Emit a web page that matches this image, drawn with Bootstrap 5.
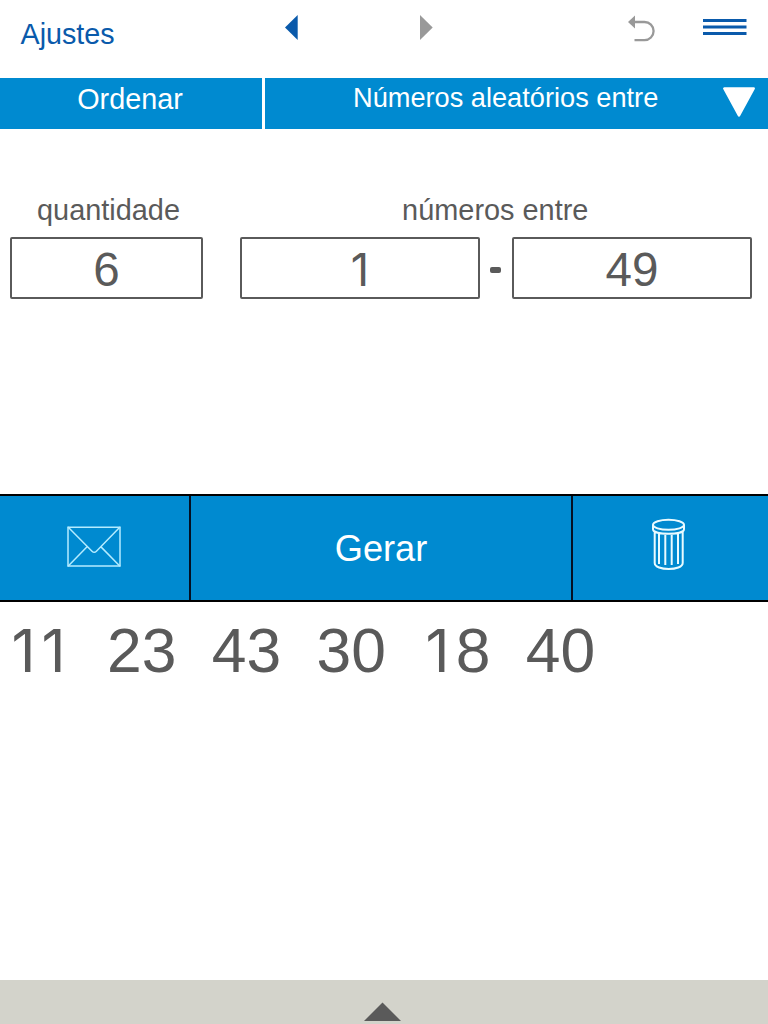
<!DOCTYPE html>
<html lang="pt">
<head>
<meta charset="utf-8">
<meta name="viewport" content="width=device-width, initial-scale=1">
<title>Números aleatórios</title>
<link href="https://cdn.jsdelivr.net/npm/bootstrap@5.3.0/dist/css/bootstrap.min.css" rel="stylesheet">
<style>
  body { font-family: "Liberation Sans", Arial, sans-serif; color: #5a5a5a; background: #fff; }
  svg { display: block; flex: none; }
  .app { height: 1024px; overflow: hidden; }
  .topbar { height: 78px; padding: 14px 21px 0 20.5px; }
  .topbar a { color: #0a5aab; font-size: 28.7px; line-height: 40px; width: 264.5px; }
  .step-next { margin-left: 122px; }
  .undo { margin-left: 195px; }
  .modes { height: 51px; color: #fff; }
  .modes > div { background: #008ad0; }
  .mode-sort { width: 262px; margin-right: 3px; font-size: 28.8px; line-height: 42px; text-indent: -2px; }
  .mode-kind { font-size: 27.2px; line-height: 40px; padding-left: 88px; padding-right: 12px; }
  .inputs { height: 365px; padding: 60px 16px 0 10px; }
  .caption { font-size: 28.9px; line-height: 42px; margin-bottom: 6px; text-align: center; }
  .caption-range { padding-right: 1.5px; }
  .qty { width: 193px; margin-right: 37px; }
  .caption-qty { padding-left: 4px; }
  .field { height: 62px; border: 2px solid #5a5a5a; border-radius: 2px; font-size: 47.6px; line-height: 62px; text-align: center; background: #fff; }
  .field-range { width: 240px; }
  .dash { width: 11px; height: 6px; border-radius: 2px; background: #5a5a5a; margin: 4px 1px 0 0; }
  .actions { height: 108px; border-top: 2px solid #000; border-bottom: 2px solid #000; background: #008ad0; color: #fff; }
  .act-mail { width: 191px; border-right: 2px solid #041022; padding-left: 67px; padding-top: 30px; }
  .act-go { width: 382px; border-right: 2px solid #041022; font-size: 36.2px; line-height: 105px; }
  .act-bin { padding-left: 78px; padding-top: 22px; }
  .results { font-size: 62.4px; line-height: 80px; padding: 9px 0 0 7px; gap: 35.3px; }
  .one { display: inline-block; width: .585em; font-family: Inter, sans-serif; font-size: .95em; text-align: center; line-height: 1; }
  .results .one { text-indent: -.03em; }
  .one + .one { margin-left: -.078em; }
  .drawer { height: 44px; background: #d3d3cb; padding: 22px 0 0 364px; }
</style>
</head>
<body>
<div class="app d-flex flex-column">
  <nav class="topbar d-flex align-items-start">
    <a href="#" class="text-decoration-none">Ajustes</a>
    <svg width="13" height="27" viewBox="0 0 13 27"><path d="M0 13.5 12.7 1v25z" fill="#0a5aab"/></svg>
    <svg class="step-next" width="13" height="27" viewBox="0 0 13 27"><path d="M12.7 13.5 0 1v25z" fill="#999"/></svg>
    <svg class="undo" width="28" height="30" viewBox="628 14 28 30"><path d="M628 22l7-6.6v13z" fill="#999"/><path d="M633 22h11.5a9 9 0 0 1 0 18.2H634.5" fill="none" stroke="#999" stroke-width="2.3"/></svg>
    <svg class="ms-auto" width="44" height="24" viewBox="703 14 44 24"><path d="M703 20.5h43.5M703 27h43.5M703 33.5h43.5" stroke="#0a5aab" stroke-width="2.8"/></svg>
  </nav>
  <div class="modes d-flex">
    <div class="mode-sort text-center">Ordenar</div>
    <div class="mode-kind d-flex flex-fill justify-content-between">
      <span class="text-nowrap">Números aleatórios entre</span>
      <svg width="34" height="50" viewBox="722 78 34 50"><path d="M724.3 88.5h29.4L739 115.5z" fill="#fff" stroke="#fff" stroke-width="2.5" stroke-linejoin="round"/></svg>
    </div>
  </div>
  <main class="inputs d-flex align-items-start">
    <div class="qty">
      <div class="caption caption-qty">quantidade</div>
      <div class="field">6</div>
    </div>
    <div class="flex-fill">
      <div class="caption caption-range">números entre</div>
      <div class="d-flex align-items-center justify-content-between">
        <div class="field field-range"><span class="one">1</span></div>
        <div class="dash"></div>
        <div class="field field-range">49</div>
      </div>
    </div>
  </main>
  <div class="actions d-flex">
    <div class="act-mail">
      <svg width="54" height="41" viewBox="67 526 54 41"><g fill="none" stroke="#b5ecff" stroke-width="1.5"><path d="M68 527.3h52v38.7H68z"/><path d="M68 527l24 24.2q2.2 2.2 4.4 0L120 527M68 566.2l19.3-19.8M120 566.2l-19.5-19.8"/></g></svg>
    </div>
    <div class="act-go text-center">Gerar</div>
    <div class="act-bin">
      <svg width="36" height="53" viewBox="651 518 36 53"><g fill="none" stroke="#e9fbff" stroke-width="2"><ellipse cx="668.5" cy="524.8" rx="15.5" ry="5"/><path d="M653 525v4.3c0 6 31 6 31 0V525M654.7 531.5V563c0 8 28 8 28 0V531.5M659 534v30M665.3 535v30M671.7 535v30M678 534v30"/></g></svg>
    </div>
  </div>
  <div class="results d-flex">
    <div><span class="one">1</span><span class="one">1</span></div>
    <div>23</div>
    <div>43</div>
    <div>30</div>
    <div><span class="one">1</span>8</div>
    <div>40</div>
  </div>
  <footer class="drawer mt-auto">
    <svg width="37" height="19" viewBox="0 0 37 19"><path d="M0 19 18.5 .5 37 19z" fill="#5a5a5a"/></svg>
  </footer>
</div>
<script src="https://cdn.jsdelivr.net/npm/bootstrap@5.3.0/dist/js/bootstrap.bundle.min.js"></script>
</body>
</html>
